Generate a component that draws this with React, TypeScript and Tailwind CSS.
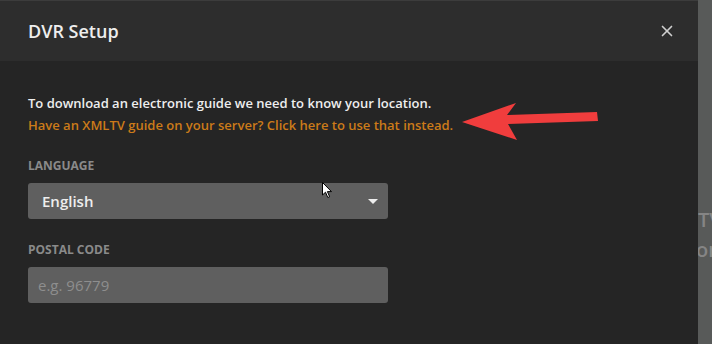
import { X } from "lucide-react";

export default function App() {
  return (
    <div
      className="relative flex h-[344px] w-[712px] overflow-hidden bg-[#585a59]"
      style={{ fontFamily: '"Open Sans", sans-serif' }}
    >
      {/* modal */}
      <div className="flex w-[698px] shrink-0 flex-col bg-[#252525]">
        <div className="flex h-[61px] items-center justify-between border-t border-[#3c3c3c] bg-[#2d2d2d] pl-7 pr-[22px]">
          <h1 className="text-[18px] font-semibold text-[#eeeeee]">DVR Setup</h1>
          <X size={18} strokeWidth={2.2} className="text-[#cfcfcf]" />
        </div>
        <div className="flex flex-col px-7 pt-[31px]">
          <p className="text-[13px] font-semibold leading-[22px] text-[#eeeeee]">
            To download an electronic guide we need to know your location.
          </p>
          <p className="text-[13px] font-semibold leading-[22px] text-[#cc7b19]">
            Have an XMLTV guide on your server? Click here to use that instead.
          </p>
          <label className="mt-[22px] text-[12px] font-bold leading-4 text-[#8a8a8a]">LANGUAGE</label>
          <div className="mt-[9px] flex h-9 w-[360px] items-center justify-between rounded-[3px] bg-[#5f5f5f] pl-[14px] pr-[10px]">
            <span className="text-[15px] font-semibold text-[#eeeeee]">English</span>
            <span className="h-0 w-0 border-x-[5px] border-t-[5px] border-x-transparent border-t-[#eeeeee]" />
          </div>
          <label className="mt-[23px] text-[12px] font-bold leading-4 text-[#8a8a8a]">POSTAL CODE</label>
          <div className="mt-[9px] flex h-9 w-[360px] items-center rounded-[3px] bg-[#5f5f5f] pl-[10px]">
            <span className="text-[15px] text-[#8e8e8e]">e.g. 96779</span>
          </div>
        </div>
      </div>

      {/* background page peeking on the right */}
      <div className="flex min-w-0 flex-1 flex-col overflow-hidden pt-[205px] text-[20px] font-semibold leading-[30px] text-[#858585]">
        <span className="whitespace-nowrap">TV</span>
        <span className="whitespace-nowrap -ml-[2px]">ork</span>
      </div>

      {/* annotation arrow */}
      <svg className="absolute left-[460px] top-[100px]" width="142" height="44" viewBox="0 0 142 44">
        <polygon
          points="2,22 56,3 47,15 137,12 138,21 48,24 57,40"
          fill="#f03d3d"
        />
      </svg>

      {/* mouse cursor */}
      <svg className="absolute left-[322px] top-[182px]" width="12" height="18" viewBox="0 0 12 18">
        <path d="M0.5,0.5 L0.5,13 L3.5,10.2 L5.8,15.5 L7.6,14.7 L5.4,9.6 L9.5,9.6 Z" fill="#fff" stroke="#000" strokeWidth="1" />
      </svg>
    </div>
  );
}
